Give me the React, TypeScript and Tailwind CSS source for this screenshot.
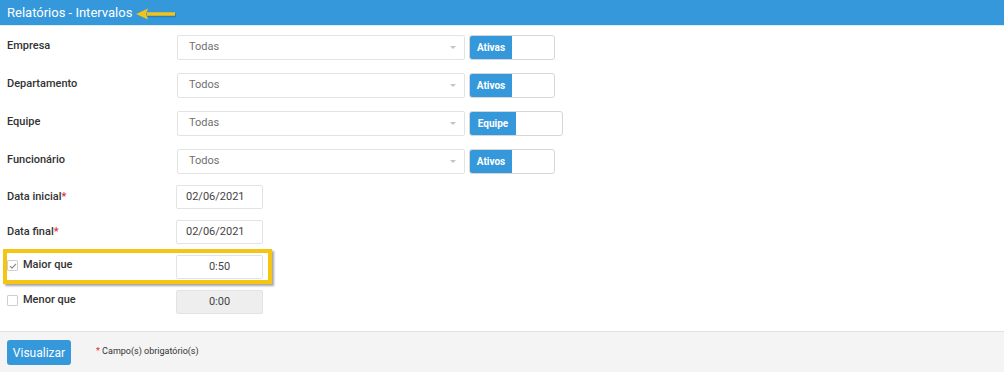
import React from 'react'

const FONT = { fontFamily: 'Roboto, "Liberation Sans", Arial, sans-serif' }

function Select({ value }: { value: string }) {
  return (
    <div className="w-[288px] h-[25px] border border-[#e3e3e3] rounded-[2px] bg-white flex items-center justify-between pl-[11px] pr-[8px]">
      <span className="text-[11px] text-[#6f6f6f]">{value}</span>
      <span className="w-0 h-0 border-l-[3px] border-r-[3px] border-t-[3px] border-l-transparent border-r-transparent border-t-[#c4c4c4]" />
    </div>
  )
}

function Toggle({ label, width, onWidth }: { label: string; width: string; onWidth: string }) {
  return (
    <div className={`${width} h-[25px] border border-[#d6d6d6] rounded-[3px] bg-white flex overflow-hidden`}>
      <div className={`${onWidth} h-full bg-[#3498db] flex items-center justify-center text-white text-[10px] font-bold`}>
        {label}
      </div>
    </div>
  )
}

function TimeInput({ value, disabled }: { value: string; disabled?: boolean }) {
  return (
    <div
      className={`w-[87px] h-[24px] border border-[#e3e3e3] rounded-[2px] flex items-center justify-center text-[11px] text-[#444] ${disabled ? 'bg-[#eeeeee]' : 'bg-white'}`}
    >
      {value}
    </div>
  )
}

function DateInput({ value }: { value: string }) {
  return (
    <div className="w-[87px] h-[24px] border border-[#e3e3e3] rounded-[2px] bg-white flex items-center pl-[9px] text-[11px] text-[#444]">
      {value}
    </div>
  )
}

function Checkbox({ checked }: { checked?: boolean }) {
  return (
    <span className="w-[11px] h-[11px] border border-[#cfcfcf] rounded-[1px] bg-white flex items-center justify-center mr-[5px]">
      {checked && (
        <svg width="8" height="8" viewBox="0 0 8 8" fill="none">
          <path d="M1 4.2 L3 6.2 L7 1.8" stroke="#8a8a8a" strokeWidth="1.1" />
        </svg>
      )}
    </span>
  )
}

export default function App() {
  const selects = [
    { label: 'Empresa', value: 'Todas', toggle: 'Ativas', w: 'w-[86px]', on: 'w-[42px]' },
    { label: 'Departamento', value: 'Todos', toggle: 'Ativos', w: 'w-[86px]', on: 'w-[42px]' },
    { label: 'Equipe', value: 'Todas', toggle: 'Equipe', w: 'w-[94px]', on: 'w-[46px]' },
    { label: 'Funcionário', value: 'Todos', toggle: 'Ativos', w: 'w-[86px]', on: 'w-[42px]' },
  ]

  return (
    <div className="w-[1004px] h-[372px] bg-white flex flex-col overflow-hidden" style={FONT}>
      {/* Cabeçalho */}
      <div className="h-[25px] bg-[#3498db] flex items-center pl-[7px] flex-shrink-0">
        <span className="text-white text-[13px] leading-none">Relatórios - Intervalos</span>
        <svg className="ml-[3px] mt-[2px]" width="44" height="16" viewBox="0 0 44 16">
          <path d="M12 8 H40" stroke="#1c4f78" strokeOpacity="0.35" strokeWidth="3.5" transform="translate(1 1.5)" />
          <path d="M12 8 H40" stroke="#f2c318" strokeWidth="3.5" />
          <path d="M1 8 L13 2.5 L11 8 L13 13.5 Z" fill="#f2c318" />
        </svg>
      </div>

      <div className="flex-1 pt-[9px] border-t border-[#dceefa]">
        {selects.map((s) => (
          <div key={s.label} className="flex items-center h-[25px] mb-[13px] pl-[7px]">
            <span className="w-[170px] text-[11px] font-medium text-[#333] -mt-[3px]">{s.label}</span>
            <Select value={s.value} />
            <div className="ml-[4px]">
              <Toggle label={s.toggle} width={s.w} onWidth={s.on} />
            </div>
          </div>
        ))}

        <div className="-mt-[2px]">
          <div className="flex items-center h-[24px] mb-[11px] pl-[7px]">
            <span className="w-[169px] text-[11px] font-medium text-[#333]">
              Data inicial<span className="text-[#e0302a]">*</span>
            </span>
            <DateInput value="02/06/2021" />
          </div>
          <div className="flex items-center h-[24px] mb-[11px] pl-[7px]">
            <span className="w-[169px] text-[11px] font-medium text-[#333]">
              Data final<span className="text-[#e0302a]">*</span>
            </span>
            <DateInput value="02/06/2021" />
          </div>
          <div className="relative flex items-center h-[24px] mb-[11px] pl-[7px]">
            <span className="w-[169px] flex items-center text-[11px] font-medium text-[#333] -mt-[3px]">
              <Checkbox checked />
              Maior que
            </span>
            <TimeInput value="0:50" />
            {/* destaque */}
            <div className="absolute left-[3px] top-[-6px] w-[269px] h-[35px] border-[4px] border-[#f5c513] shadow-[2px_2px_2px_rgba(0,0,0,0.35)] pointer-events-none" />
          </div>
          <div className="flex items-center h-[24px] pl-[7px]">
            <span className="w-[169px] flex items-center text-[11px] font-medium text-[#333] -mt-[4px]">
              <Checkbox />
              Menor que
            </span>
            <TimeInput value="0:00" disabled />
          </div>
        </div>
      </div>

      {/* Rodapé */}
      <div className="h-[41px] bg-[#f4f4f4] border-t border-[#e2e2e2] flex items-center pl-[7px] flex-shrink-0">
        <button className="w-[64px] h-[25px] bg-[#3498db] rounded-[3px] text-white text-[12px] mt-[1px]">
          Visualizar
        </button>
        <span className="ml-[25px] text-[9px] text-[#333]">
          <span className="text-[#e0302a]">*</span> Campo(s) obrigatório(s)
        </span>
      </div>
    </div>
  )
}
